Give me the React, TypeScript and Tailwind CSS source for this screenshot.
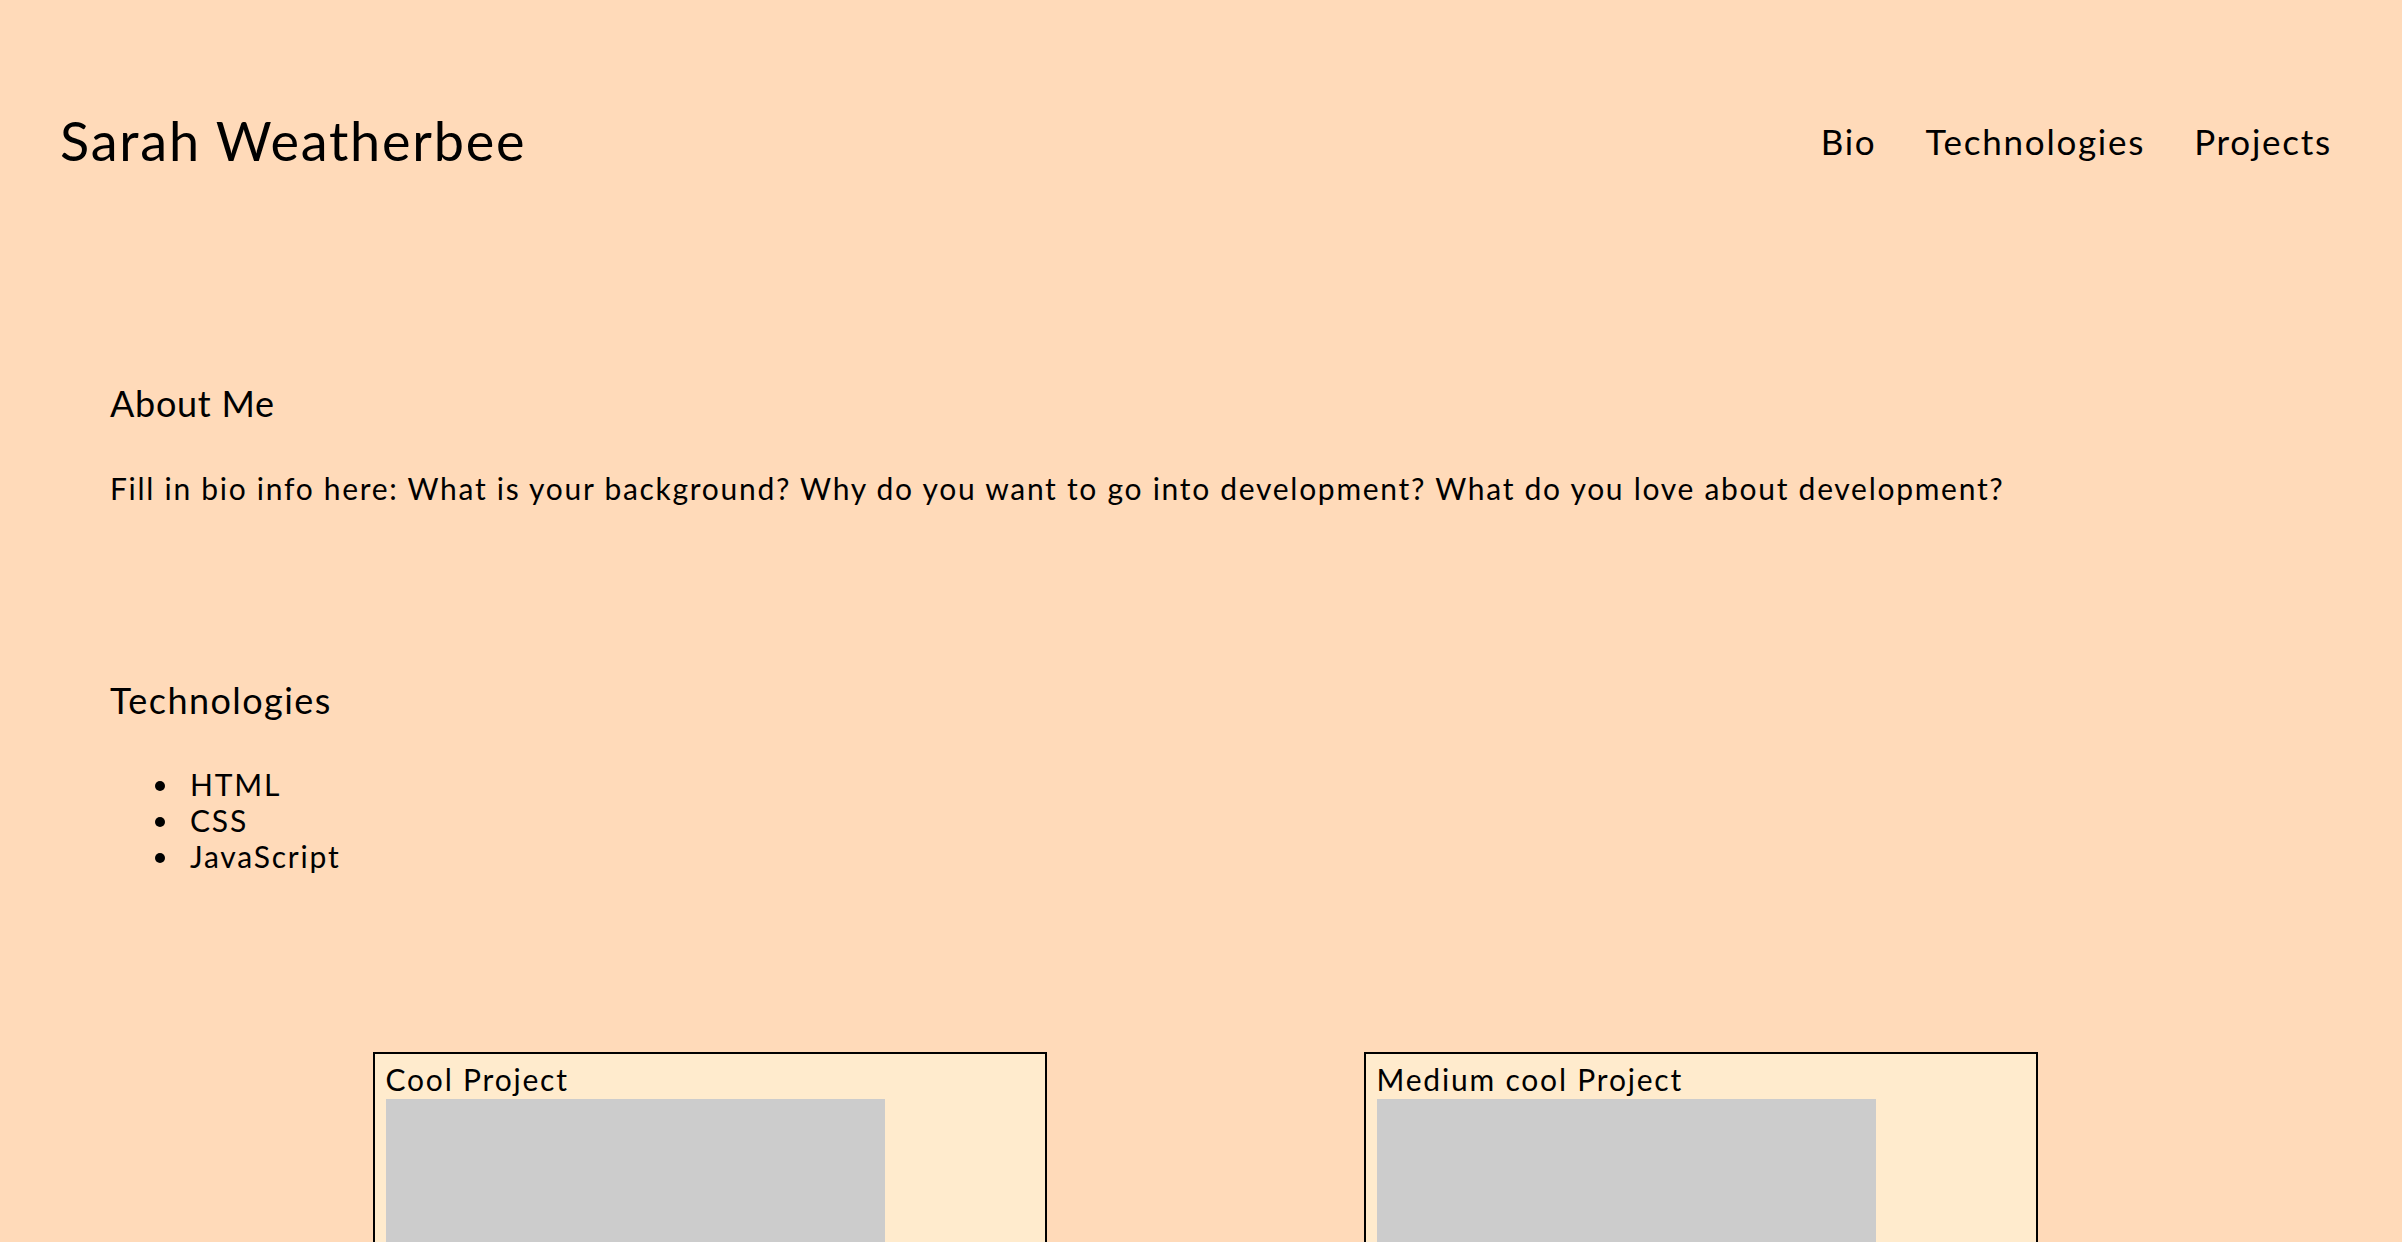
import React from 'react'

const navLinks = ['Bio', 'Technologies', 'Projects']
const technologies = ['HTML', 'CSS', 'JavaScript']
const projects = ['Cool Project', 'Medium cool Project']

function ProjectCard({ title }: { title: string }) {
  return (
    <div className="w-[674px] border-2 border-black bg-[#ffebcd] px-[11px] pt-[10px]">
      <h3 className="text-[30px] leading-none tracking-[0.06em]">{title}</h3>
      <div className="mt-[5px] h-[400px] w-[499px] bg-[#cccccc]" />
    </div>
  )
}

function App() {
  return (
    <div className="min-h-screen bg-[#ffdab9] text-black font-['Lato',sans-serif]">
      <header className="flex items-center justify-between pl-[60px] pr-[70px] pt-[114px]">
        <h1 className="text-[54px] leading-none tracking-[0.033em]">Sarah Weatherbee</h1>
        <nav>
          <ul className="flex gap-[49px] text-[35px] leading-none tracking-[0.05em]">
            {navLinks.map((link) => (
              <li key={link}>
                <a href={`#${link.toLowerCase()}`}>{link}</a>
              </li>
            ))}
          </ul>
        </nav>
      </header>

      <main>
        <section id="bio" className="pl-[110px] pt-[217px]">
          <h2 className="text-[36px] leading-none tracking-[0.02em]">About Me</h2>
          <p className="mt-[52px] text-[30px] leading-none tracking-[0.057em]">
            Fill in bio info here: What is your background? Why do you want to go into development? What do you love
            about development?
          </p>
        </section>

        <section id="technologies" className="pl-[110px] pt-[179px]">
          <h2 className="text-[36px] leading-none tracking-[0.04em]">Technologies</h2>
          <ul className="mt-[48px] list-disc pl-[72px] text-[30px] leading-[36px] tracking-[0.06em]">
            {technologies.map((tech) => (
              <li key={tech} className="pl-[8px]">
                {tech}
              </li>
            ))}
          </ul>
        </section>

        <section id="projects" className="flex justify-center gap-[317px] pt-[178px] pl-[8px] pb-10">
          {projects.map((p) => (
            <ProjectCard key={p} title={p} />
          ))}
        </section>
      </main>
    </div>
  )
}

export default App
